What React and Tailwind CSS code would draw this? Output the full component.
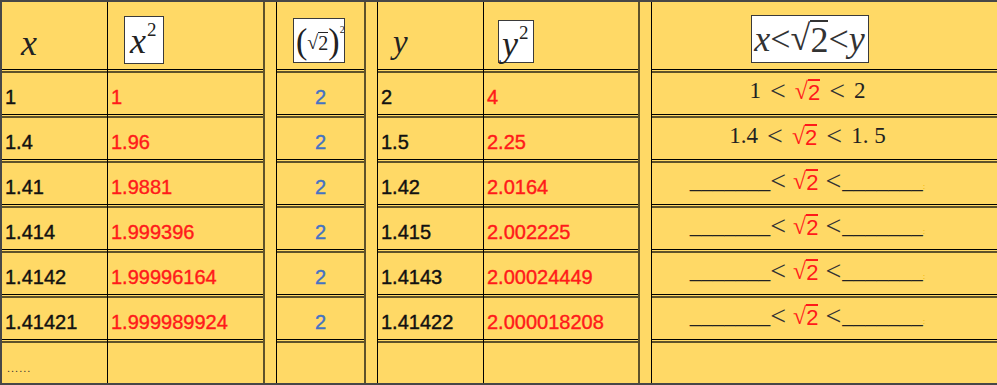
import React from 'react'

const serif = "font-['Liberation_Serif','Times_New_Roman',serif]"

const rows = [
  { x: '1', x2: '1', y: '2', y2: '4', range: ['1', '2'] },
  { x: '1.4', x2: '1.96', y: '1.5', y2: '2.25', range: ['1.4', '1. 5'] },
  { x: '1.41', x2: '1.9881', y: '1.42', y2: '2.0164' },
  { x: '1.414', x2: '1.999396', y: '1.415', y2: '2.002225' },
  { x: '1.4142', x2: '1.99996164', y: '1.4143', y2: '2.00024449' },
  { x: '1.41421', x2: '1.999989924', y: '1.41422', y2: '2.000018208' },
]

function Sep() {
  return <div className="h-[4px] flex-none border-t border-t-black border-b-2 border-b-[#5e522a]" />
}

// one full-height column: header, data rows, trailing empty row
function Column({ width, header, cells, last, className = '' }) {
  return (
    <div className={`flex-none flex flex-col ${width} ${className}`}>
      <div className="h-[67px] flex-none">{header}</div>
      <Sep />
      {cells.map((c, i) => (
        <React.Fragment key={i}>
          <div className="h-[41px] flex-none">{c}</div>
          <Sep />
        </React.Fragment>
      ))}
      <div className="h-[40px] flex-none">{last}</div>
    </div>
  )
}

function Spacer() {
  return <div className="flex-none w-[14px] border-l-2 border-l-[#5e522a] border-r border-r-black" />
}

function Num({ children, color = 'text-[#111]', center }) {
  return (
    <div className={`h-full flex items-center pt-[8px] text-[20px] leading-[23px] [-webkit-text-stroke:0.4px_currentColor] ${center ? 'justify-center' : 'pl-[3px]'} ${color}`}>
      {children}
    </div>
  )
}

function PowerBox({ base, w, h, pad }) {
  return (
    <div className={`bg-white border border-[#3a3a3a] flex items-start ${w} ${h} ${pad} ${serif} text-[#222]`}>
      <span className="italic text-[36px] leading-none mt-[5px]">{base}</span>
      <span className="text-[19px] leading-none mt-[2px] ml-[1px]">2</span>
    </div>
  )
}

function Lt() {
  return <span className={`${serif} text-[28px] leading-none mt-[-2px] text-[#333]`}>&lt;</span>
}

function Range({ r }) {
  const left = r ? r[0] : '_______'
  const right = r ? r[1] : '_______'
  return (
    <div className={`h-full flex items-center justify-center pr-[34px] pb-[4px] text-[23px] text-[#222] ${serif}`}>
      <span className={r ? 'mr-[9px]' : 'mr-[0px]'}>{left}</span>
      <Lt />
      <span className={`${r ? 'mx-[9px]' : 'mx-[7px]'} text-[#ff1a1a] font-['Liberation_Sans',sans-serif] text-[22px] flex items-start`}>
        <span className={`${serif} leading-none text-[24px]`}>√</span>
        <span className="leading-none border-t-2 border-[#ff1a1a] pt-[1px]">2</span>
      </span>
      <Lt />
      <span className={r ? 'ml-[9px]' : 'ml-[1px]'}>{right}</span>
      {!r && <span className="text-[#f0b000] text-[9px] self-end mb-[7px]">:</span>}
    </div>
  )
}

export default function App() {
  return (
    <div className="w-[997px] h-[385px] overflow-hidden bg-[#ffd966] border-t-2 border-l-2 border-b-2 border-[#474747] flex font-['Liberation_Sans',Arial,sans-serif]">
      <Column
        width="w-[106px]"
        className="border-r border-r-black"
        header={
          <div className={`pl-[19px] pt-[23px] italic text-[36px] leading-none text-[#222] ${serif}`}>x</div>
        }
        cells={rows.map(r => <Num>{r.x}</Num>)}
        last={<div className="h-full flex items-end pl-[5px] pb-[9px] text-[11px] leading-none text-[#333] tracking-[1px]">......</div>}
      />
      <Column
        width="w-[155px]"
        header={
          <div className="pl-[16px] pt-[14px]">
            <PowerBox base="x" w="w-[40px]" h="h-[48px]" pad="pl-[5px] pt-[1px]" />
          </div>
        }
        cells={rows.map(r => <Num color="text-[#ff1a1a]">{r.x2}</Num>)}
      />
      <Spacer />
      <Column
        width="w-[87px]"
        header={
          <div className="pl-[16px] pt-[16px]">
            <div className={`w-[52px] h-[45px] bg-white border border-[#3a3a3a] flex items-start pl-[2px] pt-[5px] ${serif} text-[#222]`}>
              <span className="text-[34px] leading-none scale-y-[1.08] font-light">(</span>
              <span className="flex items-start mt-[8px] text-[20px]">
                <span className="leading-none">√</span>
                <span className="leading-none border-t border-[#222]">2</span>
              </span>
              <span className="text-[34px] leading-none scale-y-[1.08] font-light">)</span>
              <span className="text-[10px] leading-none mt-[1px]">2</span>
            </div>
          </div>
        }
        cells={rows.map(() => <Num color="text-[#4472c4]" center>2</Num>)}
      />
      <Spacer />
      <Column
        width="w-[106px]"
        className="border-r border-r-black"
        header={
          <div className={`pl-[15px] pt-[24px] italic text-[33px] leading-none text-[#222] ${serif}`}>y</div>
        }
        cells={rows.map(r => <Num>{r.y}</Num>)}
      />
      <Column
        width="w-[154px]"
        header={
          <div className="pl-[14px] pt-[18px]">
            <PowerBox base="y" w="w-[36px]" h="h-[43px]" pad="pl-[3px] pt-[0px]" />
          </div>
        }
        cells={rows.map(r => <Num color="text-[#ff1a1a]">{r.y2}</Num>)}
      />
      <Spacer />
      <Column
        width="w-[345px]"
        header={
          <div className="h-full flex justify-center items-start pr-[30px] pt-[13px]">
            <div className={`w-[118px] h-[48px] bg-white border border-[#3a3a3a] flex items-center justify-center text-[36px] leading-none text-[#333] ${serif}`}>
              <span className="italic">x</span>
              <span>&lt;</span>
              <span className="flex items-start">
                <span className="leading-none">√</span>
                <span className="leading-none border-t-2 border-[#333]">2</span>
              </span>
              <span>&lt;</span>
              <span className="italic">y</span>
            </div>
          </div>
        }
        cells={rows.map(r => <Range r={r.range} />)}
      />
    </div>
  )
}
